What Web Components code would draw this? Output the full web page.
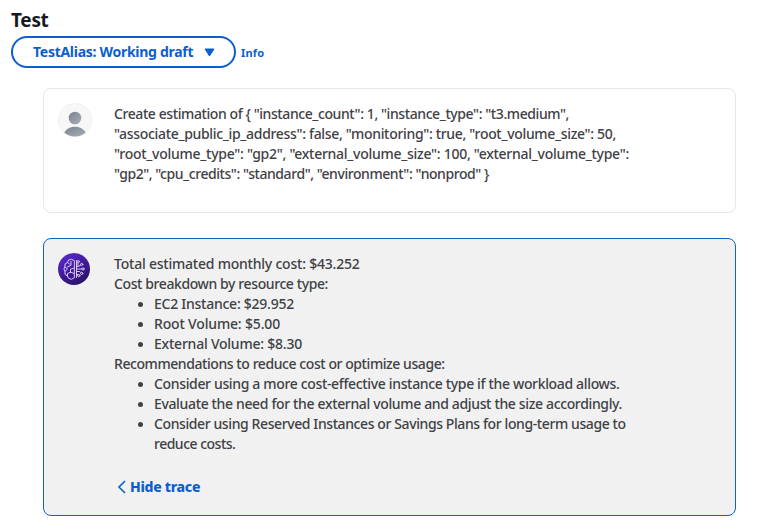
<!DOCTYPE html>
<html lang="en">
<head>
<meta charset="utf-8">
<title>Test</title>
<style>
  body {
    margin: 0;
    background: #fff;
    color: #3f4146;
    font: 500 14px/20px "Noto Sans", "Open Sans", sans-serif;
    --link: #0a5fd0;
  }
</style>
</head>
<body>
<test-panel heading="Test">
  <alias-select slot="controls">TestAlias: Working draft</alias-select>
  <info-link slot="controls">Info</info-link>

  <chat-message>
    <user-avatar slot="avatar"></user-avatar>
    <text-line track="-.414">Create estimation of { "instance_count": 1, "instance_type": "t3.medium",</text-line>
    <text-line track="-.325">"associate_public_ip_address": false, "monitoring": true, "root_volume_size": 50,</text-line>
    <text-line track="-.276">"root_volume_type": "gp2", "external_volume_size": 100, "external_volume_type":</text-line>
    <text-line track="-.437">"gp2", "cpu_credits": "standard", "environment": "nonprod" }</text-line>
  </chat-message>

  <chat-message kind="agent">
    <agent-avatar slot="avatar"></agent-avatar>
    <text-line track="-.22">Total estimated monthly cost: $43.252</text-line>
    <text-line track="-.4">Cost breakdown by resource type:</text-line>
    <bullet-item><text-line track="-.252">EC2 Instance: $29.952</text-line></bullet-item>
    <bullet-item><text-line track="-.167">Root Volume: $5.00</text-line></bullet-item>
    <bullet-item><text-line track="-.227">External Volume: $8.30</text-line></bullet-item>
    <text-line track="-.43">Recommendations to reduce cost or optimize usage:</text-line>
    <bullet-item><text-line track="-.345">Consider using a more cost-effective instance type if the workload allows.</text-line></bullet-item>
    <bullet-item><text-line track="-.354">Evaluate the need for the external volume and adjust the size accordingly.</text-line></bullet-item>
    <bullet-item>
      <text-line track="-.4">Consider using Reserved Instances or Savings Plans for long-term usage to</text-line>
      <text-line track="-.5">reduce costs.</text-line>
    </bullet-item>
    <trace-toggle slot="footer">Hide trace</trace-toggle>
  </chat-message>
</test-panel>

<script>
  function define(name, html, onConnect = Function()) {
    customElements.define(name, class extends HTMLElement {
      constructor() {
        super();
        this.attachShadow({ mode: 'open' });
        this.shadowRoot.innerHTML = html;
      }

      connectedCallback() {
        onConnect(this);
      }
    });
  }

  define('test-panel', `
    <style>
      :host { display: block; padding: 8px 28px 0 11px; }
      h1 {
        margin: 0;
        color: #16191f;
        font-size: 19px;
        font-weight: 700;
        line-height: 24px;
        letter-spacing: -.3px;
      }
      .controls { display: flex; align-items: center; gap: 5px; margin-top: 4px; }
      .messages { display: flex; flex-direction: column; gap: 25px; margin: 20px 0 0 32px; }
    </style>
    <h1></h1>
    <div class="controls"><slot name="controls"></slot></div>
    <div class="messages"><slot></slot></div>
  `, el => {
    el.shadowRoot.querySelector('h1').textContent = el.getAttribute('heading');
  });

  define('alias-select', `
    <style>
      :host { display: block; }
      button {
        box-sizing: border-box;
        display: flex;
        align-items: center;
        justify-content: space-between;
        width: 225px;
        height: 32px;
        padding: 0 19px 0 20px;
        border: 2px solid var(--link);
        border-radius: 16px;
        background: #fff;
        color: var(--link);
        font: inherit;
        font-weight: 700;
        letter-spacing: -.28px;
        white-space: nowrap;
      }
      svg { display: block; }
    </style>
    <button>
      <span><slot></slot></span>
      <svg width="11" height="9" viewBox="0 0 11 9">
        <path d="M1 1h9L5.5 8z" fill="var(--link)" stroke="var(--link)" stroke-linejoin="round"/>
      </svg>
    </button>
  `);

  define('info-link', `
    <style>
      :host {
        display: block;
        padding-top: 2px;
        color: var(--link);
        font-size: 11px;
        font-weight: 700;
        letter-spacing: .2px;
      }
    </style>
    <slot></slot>
  `);

  define('chat-message', `
    <style>
      :host {
        box-sizing: border-box;
        display: flex;
        align-items: flex-start;
        gap: 22px;
        width: 693px;
        height: 125px;
        padding: 14px;
        border: 1px solid #e6e7e8;
        border-radius: 8px;
      }
      :host([kind="agent"]) {
        height: 278px;
        border-color: #0f63bd;
        background: #f1f1f1;
      }
      .body { padding-top: 1px; }
    </style>
    <slot name="avatar"></slot>
    <div class="body">
      <slot></slot>
      <slot name="footer"></slot>
    </div>
  `);

  // one line of message text, letter-spacing in px
  define('text-line', `
    <style>
      :host { display: block; white-space: nowrap; }
    </style>
    <slot></slot>
  `, el => {
    el.style.letterSpacing = el.getAttribute('track') + 'px';
  });

  define('bullet-item', `
    <style>
      :host { display: flex; padding-left: 24px; }
      i {
        flex: none;
        width: 5px;
        height: 5px;
        margin: 8px 11px 0 0;
        border-radius: 50%;
        background: currentColor;
      }
    </style>
    <i></i>
    <div><slot></slot></div>
  `);

  define('user-avatar', `
    <style>
      :host { display: block; width: 34px; height: 34px; }
      svg { display: block; }
    </style>
    <svg width="34" height="34" viewBox="0 0 34 34">
      <defs>
        <linearGradient id="person" x1="0" y1="0" x2="1" y2="1">
          <stop offset="0" stop-color="#7a828e"/>
          <stop offset="1" stop-color="#a9afb9"/>
        </linearGradient>
        <clipPath id="disc"><circle cx="17" cy="17" r="16.5"/></clipPath>
      </defs>
      <circle cx="17" cy="17" r="16.5" fill="#f7f7f7" stroke="#f1f1f1"/>
      <g clip-path="url(#disc)" fill="url(#person)">
        <circle cx="17" cy="15" r="6.3"/>
        <path d="M6.3 34v-4.500C9 25 13 23.700 17 23.700s8 1.300 10.700 5.800V34z"/>
      </g>
    </svg>
  `);

  define('agent-avatar', `
    <style>
      :host { display: block; width: 34px; height: 34px; }
      svg { display: block; }
    </style>
    <svg width="32" height="32" viewBox="0 0 32 32">
      <defs>
        <linearGradient id="bg" x1=".2" y1="0" x2=".8" y2="1">
          <stop offset="0" stop-color="#5a2bd0"/>
          <stop offset=".5" stop-color="#40199b"/>
          <stop offset="1" stop-color="#27145f"/>
        </linearGradient>
      </defs>
      <circle cx="16" cy="16" r="16" fill="url(#bg)"/>
      <g fill="none" stroke="#d9c8f7" stroke-linecap="round" stroke-linejoin="round">
        <path d="M16 7.500 13.500 6.300 10.500 7 9.500 9.500 7 11v3L5.800 16 7 18.300v3L9.500 23l1 2.300 3 1L16 25z"/>
        <path d="M9.500 9.500l2 1.500M13 8.500v3.800l-3.500 1.700M7 14l2.500 2L7 18.300M16 15l-3.500 1.200v3M9.500 23v-2.500l3-1.300 3.500 1.200"/>
        <path d="M18.500 7.500v17M18.500 13.500H20V9.800M18.500 16h5.300M18.500 18.500h3.300l1 1M18.500 21.500h1.500"/>
        <path d="M20.500 13.500l2.200-1.500"/>
        <circle cx="20.300" cy="8.600" r="1.100"/>
        <circle cx="23.700" cy="11.400" r="1.100"/>
        <circle cx="25" cy="16" r="1.100"/>
        <circle cx="23.700" cy="20.400" r="1.100"/>
        <circle cx="20.800" cy="22.600" r="1.100"/>
      </g>
    </svg>
  `);

  define('trace-toggle', `
    <style>
      :host {
        display: flex;
        align-items: center;
        gap: 4px;
        margin: 23px 0 0 3px;
        color: var(--link);
        font-weight: 800;
        letter-spacing: -.27px;
      }
      svg { display: block; }
    </style>
    <svg width="9" height="14" viewBox="0 0 9 14">
      <path d="M8 1 2 7l6 6" fill="none" stroke="var(--link)" stroke-width="1.600"/>
    </svg>
    <span><slot></slot></span>
  `);
</script>
</body>
</html>
